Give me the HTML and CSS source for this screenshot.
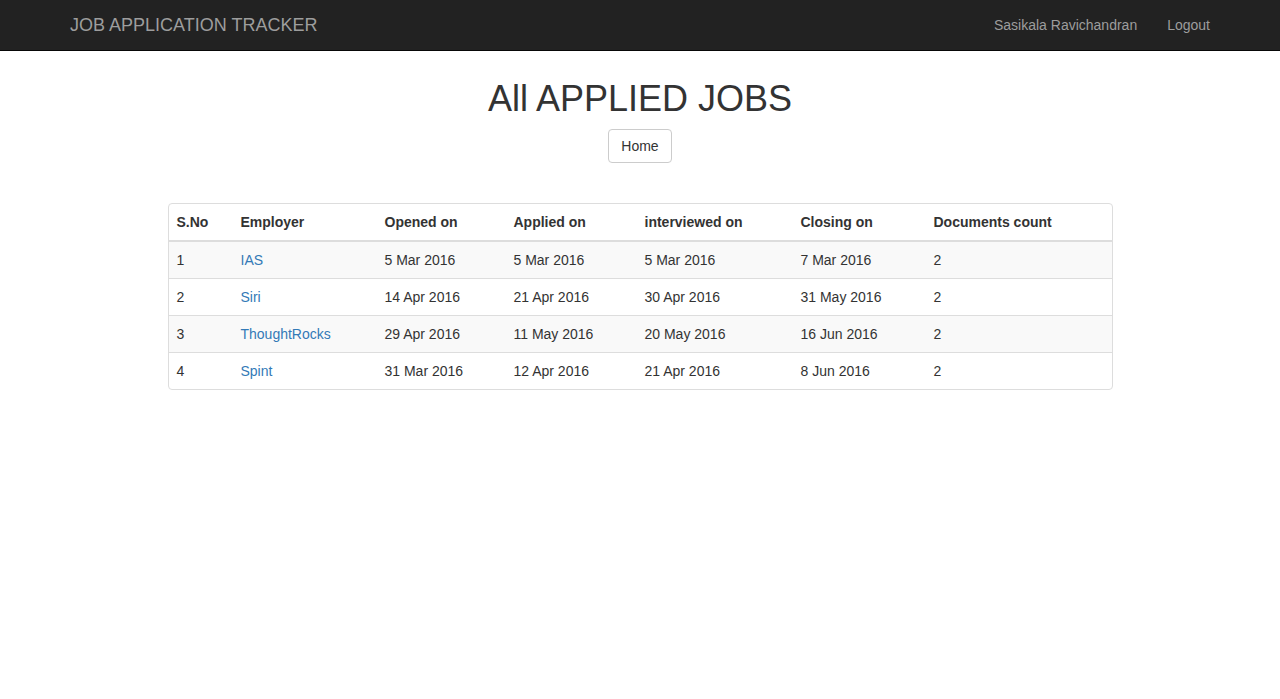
FILE: index.html
```html
<!DOCTYPE html>
<html lang="en">
<head>
<meta charset="utf-8">
<title>All Applied Jobs</title>
<link rel="stylesheet" href="styles.css">
</head>
<body>
<nav class="navbar">
  <div class="nav-container">
    <a class="brand" href="#">JOB APPLICATION TRACKER</a>
    <ul class="nav-right">
      <li><a href="#">Sasikala Ravichandran</a></li>
      <li><a href="#">Logout</a></li>
    </ul>
  </div>
</nav>
<main class="main">
  <h1 class="title">All APPLIED JOBS</h1>
  <div class="actions"><a class="btn" href="#">Home</a></div>
  <div class="panel">
    <table class="jobs">
      <colgroup>
        <col class="c1"><col class="c2"><col class="c3"><col class="c4"><col class="c5"><col class="c6"><col class="c7">
      </colgroup>
      <thead>
        <tr><th>S.No</th><th>Employer</th><th>Opened on</th><th>Applied on</th><th>interviewed on</th><th>Closing on</th><th>Documents count</th></tr>
      </thead>
      <tbody>
        <tr><td>1</td><td><a href="#">IAS</a></td><td>5 Mar 2016</td><td>5 Mar 2016</td><td>5 Mar 2016</td><td>7 Mar 2016</td><td>2</td></tr>
        <tr><td>2</td><td><a href="#">Siri</a></td><td>14 Apr 2016</td><td>21 Apr 2016</td><td>30 Apr 2016</td><td>31 May 2016</td><td>2</td></tr>
        <tr><td>3</td><td><a href="#">ThoughtRocks</a></td><td>29 Apr 2016</td><td>11 May 2016</td><td>20 May 2016</td><td>16 Jun 2016</td><td>2</td></tr>
        <tr><td>4</td><td><a href="#">Spint</a></td><td>31 Mar 2016</td><td>12 Apr 2016</td><td>21 Apr 2016</td><td>8 Jun 2016</td><td>2</td></tr>
      </tbody>
    </table>
  </div>
</main>
</body>
</html>
```
FILE: styles.css
```css
* { box-sizing: border-box; }
html, body { margin: 0; padding: 0; }
body {
  font-family: "Liberation Sans", Arial, Helvetica, sans-serif;
  font-size: 14px;
  line-height: 20px;
  color: #333;
  background: #fff;
}
a { text-decoration: none; }

.navbar {
  background: #222;
  border-bottom: 1px solid #080808;
  height: 51px;
}
.nav-container {
  width: 1170px;
  margin: 0 auto;
  padding: 0 15px;
  display: flex;
  justify-content: space-between;
  align-items: flex-start;
}
.brand {
  display: block;
  padding: 15px 0;
  height: 50px;
  font-size: 18px;
  line-height: 20px;
  color: #9d9d9d;
}
.nav-right {
  list-style: none;
  margin: 0 -15px 0 0;
  padding: 0;
  display: flex;
}
.nav-right a {
  display: block;
  padding: 15px;
  line-height: 20px;
  color: #9d9d9d;
}

.main {
  display: flex;
  flex-direction: column;
  align-items: center;
}
.title {
  margin: 28px 0 10px;
  font-size: 36px;
  font-weight: 500;
  line-height: 1.1;
  color: #333;
}
.actions { display: flex; justify-content: center; }
.btn {
  display: inline-block;
  padding: 6px 12px;
  font-size: 14px;
  line-height: 20px;
  color: #333;
  background: #fff;
  border: 1px solid #ccc;
  border-radius: 4px;
}

.panel {
  margin-top: 40px;
  width: 945px;
  border: 1px solid #ddd;
  border-radius: 4px;
  overflow: hidden;
}
.jobs {
  width: 100%;
  border-collapse: collapse;
  border-spacing: 0;
}
.c1 { width: 64px; }
.c2 { width: 144px; }
.c3 { width: 129px; }
.c4 { width: 131px; }
.c5 { width: 156px; }
.c6 { width: 133px; }
.c7 { width: 186px; }
.jobs th, .jobs td {
  padding: 8px;
  line-height: 20px;
  text-align: left;
  vertical-align: top;
}
.jobs th {
  font-weight: bold;
  border-bottom: 2px solid #ddd;
}
.jobs tbody td { border-top: 1px solid #ddd; }
.jobs tbody tr:first-child td { border-top: 0; }
.jobs tbody tr:nth-child(odd) { background: #f9f9f9; }
.jobs td a { color: #337ab7; }
```
